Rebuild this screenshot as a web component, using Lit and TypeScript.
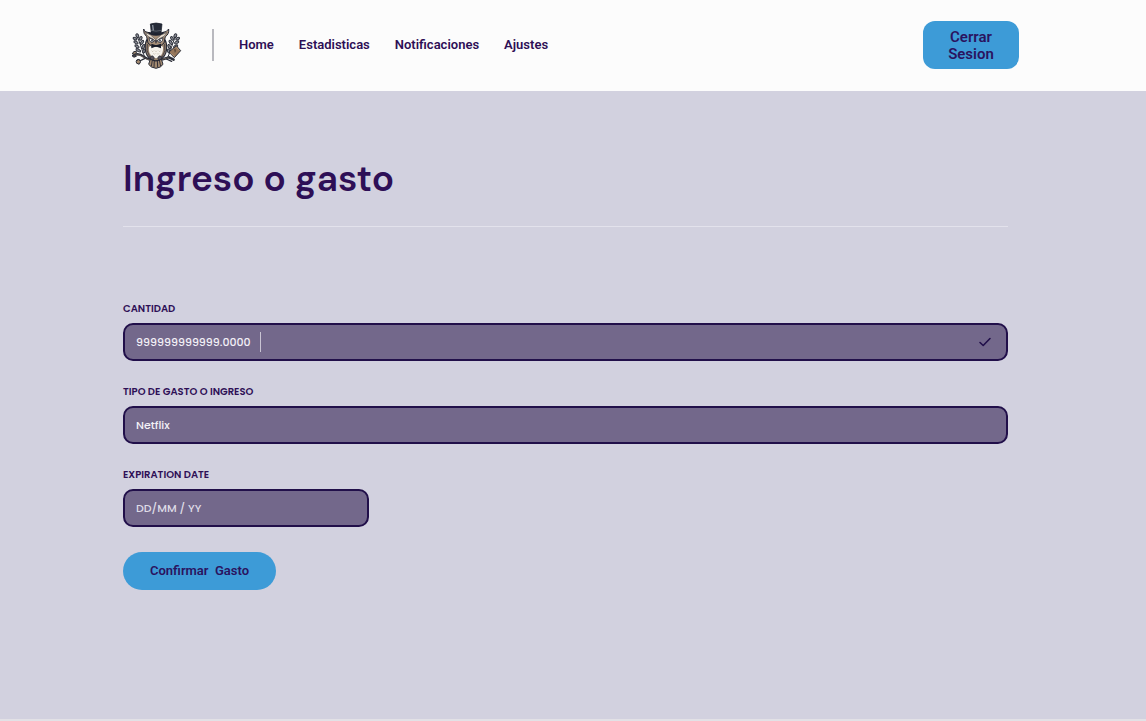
import { LitElement, html, css, svg } from "lit";
import { customElement, state } from "lit/decorators.js";

@customElement("owl-logo")
class OwlLogo extends LitElement {
  static styles = css`
    :host { display: block; width: 62px; height: 60px; }
    .art { display: block; width: 100%; height: 100%; }
  `;

  private sprig() {
    return svg`
      <path d="M62 130 C52 114 50 96 38 68" fill="none" stroke="#2b2e38" stroke-width="3"/>
      <g fill="#8d9099" stroke="#2b2e38" stroke-width="3">
        <ellipse cx="37" cy="62" rx="4" ry="6" transform="rotate(-25 37 62)"/>
        <ellipse cx="30" cy="71" rx="3.5" ry="6" transform="rotate(-65 30 71)"/>
        <ellipse cx="47" cy="70" rx="3.5" ry="6" transform="rotate(30 47 70)"/>
        <ellipse cx="33" cy="82" rx="3.5" ry="7" transform="rotate(-60 33 82)"/>
        <ellipse cx="51" cy="82" rx="3.5" ry="7" transform="rotate(35 51 82)"/>
        <ellipse cx="36" cy="94" rx="3.5" ry="7" transform="rotate(-60 36 94)"/>
        <ellipse cx="55" cy="95" rx="3.5" ry="7" transform="rotate(25 55 95)"/>
        <ellipse cx="40" cy="106" rx="3.5" ry="8" transform="rotate(-60 40 106)"/>
        <ellipse cx="57" cy="108" rx="3.5" ry="6" transform="rotate(20 57 108)"/>
      </g>`;
  }

  render() {
    return html`
      <svg class="art" viewBox="0 0 186 180" role="img" aria-label="Logo">
        ${this.sprig()}
        <g transform="translate(188 0) scale(-1 1)">${this.sprig()}</g>
        <g fill="none" stroke="#2b2e38" stroke-linecap="round">
          <path d="M28 120 Q42 114 56 125 T92 135 T132 127 L146 134" stroke-width="7"/>
          <path d="M30 120 Q42 116 56 127 T92 135 T130 129" stroke="#8b7866" stroke-width="2"/>
          <path d="M60 130 L44 138 M124 132 L140 139" stroke-width="4"/>
        </g>
        <g fill="#a28a70" stroke="#2b2e38" stroke-width="3">
          <path d="M22 117 Q24 107 34 109 Q36 120 22 117Z"/>
          <path d="M21 122 Q29 117 34 124 Q26 130 21 122Z" fill="#55525a"/>
          <circle cx="40" cy="140" r="6.5"/>
          <path d="M34 137 Q40 130 47 137 M40 146 L42 149" fill="none"/>
        </g>
        <path d="M76 132 L71 148 Q77 158 93 160 Q108 158 114 148 L109 132Z" fill="#a28a70" stroke="#2b2e38" stroke-width="3"/>
        <path d="M82 135 L79 154 M88 135 L87 157 M97 135 L98 157 M103 135 L107 154" stroke="#343039" stroke-width="3"/>
        <path d="M68 70 C56 88 58 120 78 133 Q93 142 107 133 C128 120 130 88 117 70Z" fill="#95806b" stroke="#242733" stroke-width="3.5"/>
        <path d="M67 87 Q62 108 75 127 M119 87 Q124 108 111 127" fill="none" stroke="#4a444a" stroke-width="3"/>
        <path d="M72 95 Q93 84 114 95 Q116 115 103 127 L93 130 L83 127 Q69 114 72 95Z" fill="#f6f2ec"/>
        <path d="M80 107 l3 3 3-3 M90 107 l3 3 3-3 M101 107 l3 3 3-3 M85 115 l3 3 3-3 M96 115 l3 3 3-3" fill="none" stroke="#ab9c8a" stroke-width="1.5"/>
        <path d="M76 125 Q84 118 88 129 L84 135 L77 133Z M110 125 Q102 118 98 129 L102 135 L109 133Z" fill="#575058" stroke="#242733" stroke-width="2"/>
        <path d="M56 42 Q59 53 76 53 Q92 50 110 53 Q126 52 131 42 Q133 57 121 65 L117 84 Q107 97 93 94 Q78 97 69 84 L65 65 Q54 56 56 42Z" fill="#a89079" stroke="#242733" stroke-width="3"/>
        <path d="M62 53 Q76 56 92 74 Q108 56 125 53 Q120 66 103 71 L93 82 L83 71 Q66 66 62 53Z" fill="#e8ddce" stroke="#2b2e38" stroke-width="1.5"/>
        <path d="M72 68 L88 76 Q86 84 78 82 Q72 78 72 68Z M114 68 L97 76 Q99 84 108 82 Q114 78 114 68Z" fill="#eeeef0" stroke="#242733" stroke-width="2.5"/>
        <circle cx="81" cy="77" r="2.5" fill="#242733"/>
        <circle cx="105" cy="77" r="2.5" fill="#242733"/>
        <path d="M89 77 L93 73 L97 77 L93 88Z" fill="#45424a"/>
        <path d="M79 86 L91 90 H95 L108 86 V100 L95 95 H91 L79 100Z" fill="#171b28"/>
        <path d="M76 27 Q93 21 111 27 L108 55 Q93 60 79 55Z" fill="#252b38" stroke="#151925" stroke-width="2"/>
        <path d="M83 30 L85 47" stroke="#8b929e" stroke-width="4"/>
        <path d="M78 46 Q93 51 109 46" fill="none" stroke="#717780" stroke-width="2"/>
        <path d="M67 50 Q93 61 119 50 Q115 61 93 62 Q72 61 67 50Z" fill="#1d2230"/>
        <path d="M132 111 L154 92 L167 107 L148 128Z" fill="#95765a" stroke="#2b2e38" stroke-width="3" stroke-linejoin="round"/>
        <path d="M136 114 L149 124 M154 96 L162 106" stroke="#c1a384" stroke-width="2"/>
        <path d="M147 105 L151 104 L150 112" fill="none" stroke="#3d332e" stroke-width="2.5"/>
      </svg>`;
  }
}

@customElement("app-root")
class AppRoot extends LitElement {
  @state() private links = ["Home", "Estadisticas", "Notificaciones", "Ajustes"];

  static styles = css`
    * { box-sizing: border-box; }
    :host {
      display: flex;
      flex-direction: column;
      min-height: 100vh;
      box-sizing: border-box;
      background: #d2d1df;
      border-bottom: 2px solid #e2e1e6;
      color: #2e0f56;
      font-family: Roboto, "Liberation Sans", sans-serif;
    }
    .header {
      display: flex;
      align-items: center;
      padding: 15px 127px 16px 125px;
      background: #fcfcfc;
    }
    .divider { width: 2px; height: 32px; margin: 0 25px; background: #b9b9bf; }
    .nav { display: flex; gap: 25px; flex: 1; }
    .link {
      color: inherit;
      font-size: 13px;
      line-height: 16px;
      font-weight: 600;
      text-decoration: none;
    }
    .button {
      border: 0;
      background: #3d9bd7;
      color: #2a1360;
      font-family: inherit;
      font-weight: 600;
      cursor: pointer;
    }
    .logout {
      width: 96px;
      padding: 8px 20px 6px;
      border-radius: 12px;
      font-size: 15px;
      line-height: 17px;
    }
    .main { padding: 62px 138px 62px 123px; }
    .title {
      margin: 0;
      padding-bottom: 23px;
      border-bottom: 1px solid #e3e2ec;
      font-family: "DM Sans", "Open Sans", sans-serif;
      font-size: 37px;
      line-height: 50px;
      font-weight: 600;
    }
    .form {
      display: flex;
      flex-direction: column;
      align-items: flex-start;
      gap: 25px;
      padding-top: 76px;
      font-family: Poppins, Inter, sans-serif;
    }
    .field { width: 100%; }
    .field.short { width: 246px; }
    .label {
      display: block;
      margin-bottom: 8px;
      font-size: 10px;
      line-height: 12px;
      font-weight: 600;
    }
    .box {
      display: flex;
      align-items: center;
      height: 38px;
      padding: 0 14px 0 11px;
      border: 2px solid #210f4a;
      border-radius: 10px;
      background: #73688b;
    }
    .input {
      flex: 1;
      min-width: 0;
      padding: 0;
      border: 0;
      outline: 0;
      background: none;
      color: #f3f1f7;
      font-family: inherit;
      font-size: 11px;
      line-height: 16px;
      font-weight: 500;
    }
    .input.fit { flex: 0 1 auto; field-sizing: content; }
    .input::placeholder { color: #dedbe6; opacity: 1; }
    .caret { width: 1px; height: 20px; margin-left: 9px; background: #c9c4d3; }
    .check { width: 14px; height: 14px; margin-left: auto; }
    .confirm {
      height: 38px;
      padding: 0 27px;
      border-radius: 19px;
      font-family: Roboto, "Liberation Sans", sans-serif;
      font-size: 13px;
      line-height: 16px;
      white-space: pre;
    }
  `;

  render() {
    return html`
      <header class="header">
        <owl-logo></owl-logo>
        <span class="divider"></span>
        <nav class="nav">
          ${this.links.map((name) => html`<a class="link" href="#${name.toLowerCase()}">${name}</a>`)}
        </nav>
        <button class="button logout" type="button">Cerrar Sesion</button>
      </header>
      <main class="main">
        <h1 class="title">Ingreso o gasto</h1>
        <form class="form" @submit=${(e: Event) => e.preventDefault()}>
          <div class="field">
            <label class="label" for="amount">CANTIDAD</label>
            <div class="box">
              <input class="input fit" id="amount" type="text" inputmode="decimal" value="999999999999.0000" />
              <span class="caret"></span>
              <svg class="check" viewBox="0 0 14 14" aria-hidden="true">
                <path d="M2 7.5 L5.2 10.5 L12 3.5" fill="none" stroke="#210f4a" stroke-width="1.6" stroke-linecap="round" stroke-linejoin="round" />
              </svg>
            </div>
          </div>
          <div class="field">
            <label class="label" for="kind">TIPO DE GASTO O INGRESO</label>
            <div class="box"><input class="input" id="kind" type="text" value="Netflix" /></div>
          </div>
          <div class="field short">
            <label class="label" for="date">EXPIRATION DATE</label>
            <div class="box"><input class="input" id="date" type="text" placeholder="DD/MM / YY" /></div>
          </div>
          <button class="button confirm" type="submit">Confirmar  Gasto</button>
        </form>
      </main>
    `;
  }
}
